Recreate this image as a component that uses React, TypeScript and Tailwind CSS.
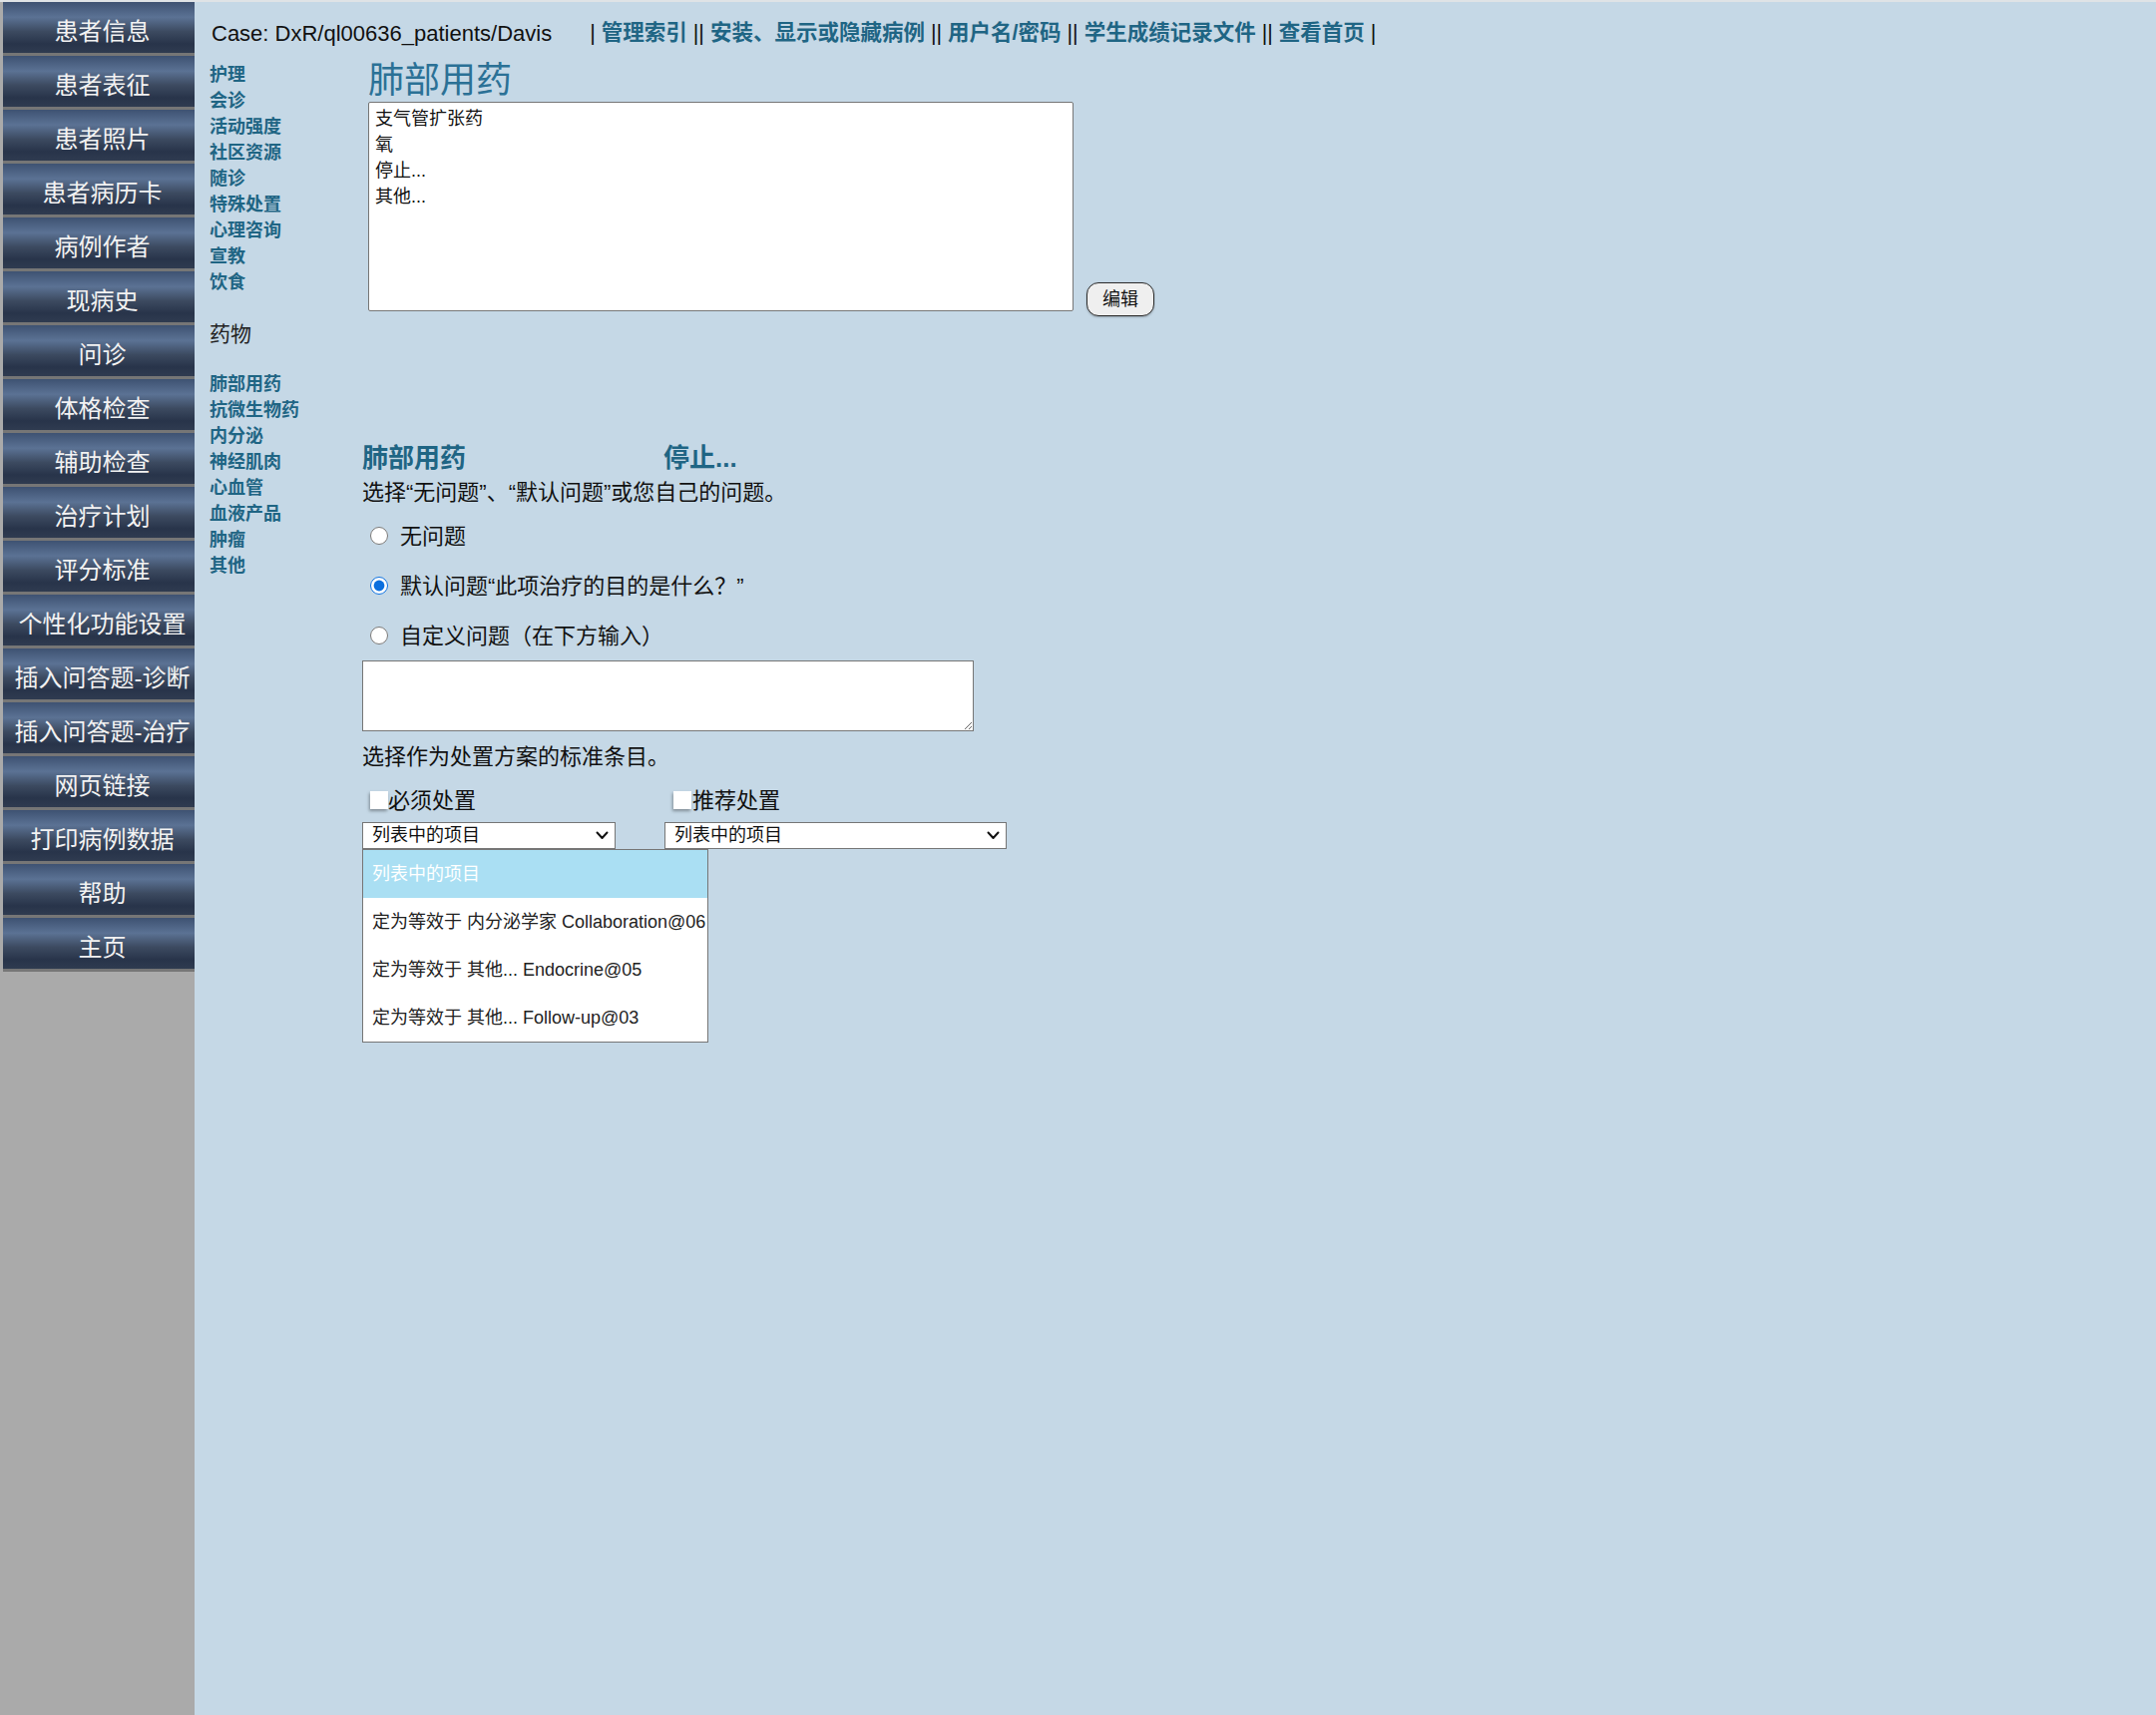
import React from 'react';

const SIDE_ITEMS = [
  '患者信息', '患者表征', '患者照片', '患者病历卡', '病例作者', '现病史', '问诊', '体格检查', '辅助检查',
  '治疗计划', '评分标准', '个性化功能设置', '插入问答题-诊断', '插入问答题-治疗', '网页链接', '打印病例数据', '帮助', '主页',
];

const CARE_LINKS = ['护理', '会诊', '活动强度', '社区资源', '随诊', '特殊处置', '心理咨询', '宣教', '饮食'];
const DRUG_LINKS = ['肺部用药', '抗微生物药', '内分泌', '神经肌肉', '心血管', '血液产品', '肿瘤', '其他'];
const LIST_ITEMS = ['支气管扩张药', '氧', '停止...', '其他...'];

const OPTIONS = [
  '定为等效于 内分泌学家 Collaboration@06',
  '定为等效于 其他... Endocrine@05',
  '定为等效于 其他... Follow-up@03',
];

const Chevron = () => (
  <svg width="13" height="9" viewBox="0 0 13 9" fill="none">
    <polyline points="1.5,1.5 6.5,7 11.5,1.5" stroke="#111" strokeWidth="2" strokeLinecap="round" strokeLinejoin="round" />
  </svg>
);

const Checkbox = () => (
  <span className="inline-block w-[18px] h-[18px] bg-white shadow-[-1px_2px_3px_rgba(0,0,0,0.35)]" />
);

const App: React.FC = () => {
  return (
    <div
      className="flex min-h-screen border-t-2 border-[#dfe3e6] bg-[#c5d8e6] text-[#111]"
      style={{ fontFamily: "'Liberation Sans', 'Noto Sans CJK SC', sans-serif" }}
    >
      {/* Left menu */}
      <aside className="w-[195px] shrink-0 bg-[#aaaaaa] pl-[3px] flex flex-col">
        {SIDE_ITEMS.map(item => (
          <div key={item} className="flex flex-col">
            <div className="h-[51px] flex items-center justify-center pt-[9px] pl-[7px] whitespace-nowrap text-[24px] text-[#f2f2f2] bg-[linear-gradient(180deg,#3e5272_0%,#5b7294_30%,#3c4a60_58%,#28344a_82%,#2f3b50_100%)]">
              {item}
            </div>
            <div className="h-[3px] bg-[#767676]" />
          </div>
        ))}
      </aside>

      <main className="flex-1 pl-[15px]">
        {/* Header */}
        <div className="h-[60px] flex items-center pt-[3px] pl-[2px] whitespace-nowrap">
          <span className="text-[22px]">Case: DxR/ql00636_patients/Davis</span>
          <span className="ml-[38px] text-[21.5px]">
            |{' '}
            <a className="font-bold text-[#1f6584]">管理索引</a> ||{' '}
            <a className="font-bold text-[#1f6584]">安装、显示或隐藏病例</a> ||{' '}
            <a className="font-bold text-[#1f6584]">用户名/密码</a> ||{' '}
            <a className="font-bold text-[#1f6584]">学生成绩记录文件</a> ||{' '}
            <a className="font-bold text-[#1f6584]">查看首页</a> |
          </span>
        </div>

        <div className="flex">
          {/* Sub navigation */}
          <nav className="w-[153px] shrink-0">
            {CARE_LINKS.map(l => (
              <div key={l} className="text-[18px] leading-[26px] font-bold text-[#1f6584]">{l}</div>
            ))}
            <div className="mt-[24px] text-[21px] leading-[30px] text-[#222]">药物</div>
            <div className="mt-[22px]">
              {DRUG_LINKS.map(l => (
                <div key={l} className="text-[18px] leading-[26px] font-bold text-[#1f6584]">{l}</div>
              ))}
            </div>
          </nav>

          {/* Content */}
          <div className="flex-1">
            <div className="ml-[6px]">
              <h1 className="text-[36px] leading-[38px] text-[#2b7196]">肺部用药</h1>
              <div className="mt-[2px] flex items-end gap-[13px]">
                <div className="w-[707px] h-[210px] bg-white border border-[#767676] rounded-[2px] pt-[3px] pl-[6px]">
                  {LIST_ITEMS.map(i => (
                    <div key={i} className="text-[18px] leading-[26px]">{i}</div>
                  ))}
                </div>
                <button className="mb-[-5px] w-[68px] h-[34px] rounded-[12px] border border-[#2b2b2b] bg-[#efefef] text-[18px] shadow-[0_1px_2px_rgba(0,0,0,0.25)]">
                  编辑
                </button>
              </div>
            </div>

            <div className="mt-[130px] text-[26px] leading-[34px] font-bold text-[#1f6584] whitespace-nowrap">
              <span className="inline-block w-[302px]">肺部用药</span>
              <span>停止...</span>
            </div>
            <p className="mt-[3px] text-[22px] leading-[30px]">选择“无问题”、“默认问题”或您自己的问题。</p>

            <div className="mt-[3px]">
              <label className="h-[50px] flex items-center">
                <input type="radio" name="q" className="ml-[8px] w-[18px] h-[18px] m-0 accent-[#0b6fde]" />
                <span className="ml-[12px] text-[22px]">无问题</span>
              </label>
              <label className="h-[50px] flex items-center">
                <input type="radio" name="q" defaultChecked className="ml-[8px] w-[18px] h-[18px] m-0 accent-[#0b6fde]" />
                <span className="ml-[12px] text-[22px]">默认问题“此项治疗的目的是什么？”</span>
              </label>
              <label className="h-[50px] flex items-center">
                <input type="radio" name="q" className="ml-[8px] w-[18px] h-[18px] m-0 accent-[#0b6fde]" />
                <span className="ml-[12px] text-[22px]">自定义问题（在下方输入）</span>
              </label>
            </div>

            <textarea className="block w-[613px] h-[71px] bg-white border border-[#767676]" />

            <p className="mt-[11px] text-[22px] leading-[30px]">选择作为处置方案的标准条目。</p>

            <div className="mt-[13px] flex h-[30px] items-center">
              <div className="w-[303px] flex items-center pl-[8px]">
                <Checkbox />
                <span className="text-[22px]">必须处置</span>
              </div>
              <div className="flex items-center pl-[9px]">
                <Checkbox />
                <span className="ml-[1px] text-[22px]">推荐处置</span>
              </div>
            </div>

            <div className="mt-[7px] relative flex">
              <div className="w-[254px] h-[27px] flex items-center justify-between border border-[#767676] bg-white pl-[9px] pr-[6px] text-[18px]">
                <span>列表中的项目</span>
                <Chevron />
              </div>
              <div className="ml-[49px] w-[343px] h-[27px] flex items-center justify-between border border-[#767676] bg-white pl-[9px] pr-[6px] text-[18px]">
                <span>列表中的项目</span>
                <Chevron />
              </div>

              {/* Open dropdown list */}
              <div className="absolute left-0 top-[27px] z-10 w-[347px] border border-[#767676] bg-white overflow-hidden">
                <div className="h-[48px] flex items-center pl-[9px] bg-[#aadff3] text-[18px] text-white">列表中的项目</div>
                {OPTIONS.map(o => (
                  <div key={o} className="h-[48px] flex items-center pl-[9px] text-[18px] whitespace-nowrap text-[#222]">{o}</div>
                ))}
              </div>
            </div>
          </div>
        </div>
      </main>
    </div>
  );
};

export default App;
